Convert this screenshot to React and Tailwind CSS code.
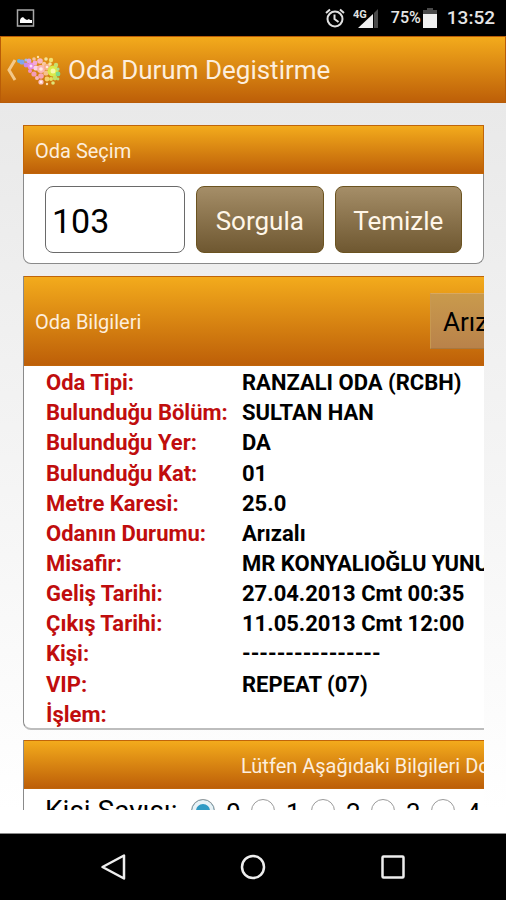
import React, { useState } from "react";

const roomInfo = [
  { label: "Oda Tipi:", value: "RANZALI ODA (RCBH)" },
  { label: "Bulunduğu Bölüm:", value: "SULTAN HAN" },
  { label: "Bulunduğu Yer:", value: "DA" },
  { label: "Bulunduğu Kat:", value: "01" },
  { label: "Metre Karesi:", value: "25.0" },
  { label: "Odanın Durumu:", value: "Arızalı" },
  { label: "Misafir:", value: "MR KONYALIOĞLU YUNUS" },
  { label: "Geliş Tarihi:", value: "27.04.2013 Cmt 00:35" },
  { label: "Çıkış Tarihi:", value: "11.05.2013 Cmt 12:00" },
  { label: "Kişi:", value: "----------------" },
  { label: "VIP:", value: "REPEAT (07)" },
  { label: "İşlem:", value: "" },
];

const guestCounts = [0, 1, 2, 3, 4];

const bubbles = [
  [2, 7, 2, "#5fb4e8"], [5, 8, 2.6, "#7fa6ea"], [9, 6, 1.6, "#9fc0e8"],
  [9, 11, 2.4, "#c98be6"], [12, 7, 2.4, "#d9a6ea"], [14, 12, 3.6, "#e58be0"],
  [13, 17, 2, "#f08fc8"], [17, 5, 1.8, "#f5c3a0"], [18, 9, 2.4, "#f3a8d8"],
  [19, 14, 2.6, "#fbd3e6"], [17, 20, 2.6, "#f39cb8"], [21, 3, 1.2, "#ffe3a8"],
  [23, 7, 2.8, "#f9b8c0"], [24, 15, 4, "#fbb6b4"], [20, 24, 2, "#f9b4c0"],
  [24, 22, 2.8, "#f7a6b4"], [24, 28, 2.6, "#fbc0c4"], [27, 10, 2.2, "#f9c8a0"],
  [29, 5, 1.8, "#f6e39a"], [30, 13, 3.2, "#f8b08a"], [29, 19, 2.6, "#f7c08a"],
  [30, 25, 2.4, "#f5d06a"], [34, 6, 2.2, "#f3e070"], [33, 10, 1.8, "#f6e8a0"],
  [36, 17, 5.5, "#dcea4a"], [39, 11, 2.2, "#c6e070"], [41, 15, 1.6, "#a8e090"],
  [41, 20, 2.4, "#7fdc8a"], [38, 24, 2.4, "#c6e060"], [34, 25, 2, "#e6e060"],
  [36, 29, 1.8, "#e0e478"], [41, 25, 1.4, "#b6e070"], [30, 30, 1.2, "#f6ddb0"],
];

const StatusBar = () => (
  <div className="flex h-9 shrink-0 items-center bg-black pl-4 pr-[11px] text-[#e6e6e6]">
    <svg viewBox="0 0 20 20" className="h-5 w-5" fill="none">
      <rect x="1.500" y="2" width="16" height="16" stroke="#a8a8a8" strokeWidth="1.5" />
      <path d="M4 15v-3l1-2 2-1 2 2 2 1 2-1 1 1h2v3z" fill="#fff" />
    </svg>
    <svg viewBox="0 0 20 20" className="ml-auto h-5 w-5" fill="none" stroke="#e0e0e0" strokeWidth="2">
      <circle cx="10" cy="11" r="7.5" />
      <path d="M9.500 6.500V11l4 3M1 5l4-3.500M19 5l-4-3.500" />
    </svg>
    <svg viewBox="0 0 26 22" className="ml-2 h-[22px] w-[26px]">
      <path d="M20 7v14H5z" fill="#f0f0f0" />
      <path d="M21 6l4-4v19h-4z" fill="#4a4a4a" />
      <text x="0" y="11" fontSize="11" fontWeight="700" fontFamily="Roboto" fill="#e0e0e0">4G</text>
    </svg>
    <span className="ml-3 text-base font-medium">75%</span>
    <svg viewBox="0 0 14 20" className="ml-[2px] h-5 w-[14px]">
      <path d="M4 0h6v2h4v4H0V2h4z" fill="#4a4a4a" />
      <path d="M0 6h14v14H0z" fill="#f0f0f0" />
    </svg>
    <span className="ml-[10px] text-[19px] font-medium">13:52</span>
  </div>
);

const TitleBar = () => (
  <header className="flex h-[67px] shrink-0 items-center border border-[#b85c08] bg-linear-to-b from-[#f3ab1c] to-[#bd5f08] pl-1 shadow-md">
    <button type="button" aria-label="Geri" className="flex items-center">
      <svg viewBox="0 0 12 24" className="h-6 w-3" fill="none" stroke="#f3c98a" strokeWidth="3">
        <path d="M10 2L4 12l6 10" />
      </svg>
      <svg viewBox="0 0 44 32" className="h-8 w-11">
        {bubbles.map(([x, y, r, color], index) => (
          <circle key={index} cx={x} cy={y} r={r} fill={color} />
        ))}
        <circle cx="36" cy="17" r="2.5" fill="#f8f8a8" />
        <circle cx="14" cy="12" r="1.5" fill="#fbe0fa" />
        <circle cx="24" cy="15" r="1.8" fill="#ffece8" />
        <circle cx="30" cy="13" r="1.3" fill="#ffece0" />
        <circle cx="24" cy="28" r="1.2" fill="#fff0f0" />
      </svg>
    </button>
    <h1 className="pl-[7px] pt-[2px] text-[26px] text-[#fdeedd]">Oda Durum Degistirme</h1>
  </header>
);

const App = () => {
  const [room, setRoom] = useState("103");
  const [guests, setGuests] = useState(0);

  return (
    <div className="flex h-screen flex-col bg-white font-[Roboto,sans-serif]">
      <StatusBar />
      <TitleBar />

      <main className="min-h-0 flex-1 overflow-hidden bg-linear-to-b from-[#e9e9e9] to-white pl-[23px] pr-[22px] pt-[22px]">
        <section className="mb-3 rounded-b-lg border border-t-0 border-[#8a8a8a] bg-white">
          <h2 className="-mx-px flex h-[49px] items-center border border-[#c0650a] bg-linear-to-b from-[#f3ab1c] to-[#bd5f08] pl-[11px] pt-[2px] text-xl text-[#fdeedd]">
            Oda Seçim
          </h2>
          <div className="flex gap-[11px] px-[21px] pb-[10px] pt-3">
            <input
              type="text"
              aria-label="Oda"
              value={room}
              onChange={(e) => setRoom(e.target.value)}
              className="h-[67px] w-[140px] rounded-lg border border-[#6a6a6a] bg-white px-[6px] pt-[2px] text-[34px] text-black"
            />
            <button
              type="button"
              className="h-[67px] flex-1 rounded-lg border border-[#6b5320] bg-linear-to-b from-[#a58e68] to-[#6f5831] pt-1 text-[26px] text-[#fff6e8]"
            >
              Sorgula
            </button>
            <button
              type="button"
              onClick={() => setRoom("")}
              className="h-[67px] flex-1 rounded-lg border border-[#6b5320] bg-linear-to-b from-[#a58e68] to-[#6f5831] pt-1 text-[26px] text-[#fff6e8]"
            >
              Temizle
            </button>
          </div>
        </section>

        <section className="mb-[10px] overflow-hidden rounded-bl-lg border-b-2 border-l border-b-[#bdbdbd] border-l-[#8a8a8a] bg-white">
          <div className="-ml-px flex h-[90px] w-[640px] items-center border border-[#c0650a] bg-linear-to-b from-[#f3ab1c] to-[#bd5f08] pl-[11px]">
            <h2 className="w-[395px] pt-[2px] text-xl text-[#fdeedd]">Oda Bilgileri</h2>
            <button
              type="button"
              className="h-14 border border-t-[#d8a860] border-r-[#a87840] border-b-[#a87840] border-l-[#c89850] bg-linear-to-b from-[#c99a4c] to-[#b9824a] px-3 pt-[2px] text-[26px] text-black"
            >
              Arızalı
            </button>
          </div>
          <table className="h-[362px] w-[640px] table-fixed text-left text-[22px] leading-[26px]">
            <tbody>
              {roomInfo.map((row) => (
                <tr key={row.label}>
                  <th className="w-[218px] p-0 pl-[22px] pt-1 font-bold text-[#c00d0d]">{row.label}</th>
                  <td className="whitespace-nowrap p-0 pt-1 font-bold text-black">{row.value}</td>
                </tr>
              ))}
            </tbody>
          </table>
        </section>

        <section className="overflow-hidden border-l border-[#8a8a8a] bg-white">
          <h2 className="-ml-px flex h-[49px] w-[640px] items-center border border-[#c0650a] bg-linear-to-b from-[#f3ab1c] to-[#bd5f08] pl-[217px] pt-[2px] text-xl text-[#fdeedd]">
            Lütfen Aşağıdaki Bilgileri Doldurunuz
          </h2>
          <div role="radiogroup" aria-labelledby="guests-label" className="flex w-[640px] items-start pl-[21px] pt-[10px] text-[26px]">
            <span id="guests-label" className="w-[146px] whitespace-nowrap text-[28px] leading-6">
              Kişi Sayısı:
            </span>
            {guestCounts.map((count) => (
              <label key={count} className="flex w-[60px] items-start gap-[11px] leading-7">
                <input
                  type="radio"
                  name="guests"
                  checked={guests === count}
                  onChange={() => setGuests(count)}
                  className="h-6 w-6 appearance-none rounded-full border border-[#9a9a9a] bg-white checked:bg-[#2f9ac4] checked:shadow-[inset_0_0_0_4px_#e8f2f6]"
                />
                {count}
              </label>
            ))}
          </div>
        </section>
      </main>

      <div className="h-[23px] shrink-0 bg-white" />
      <nav className="flex h-[67px] shrink-0 items-center justify-center gap-28 border-t border-[#8a8a8a] bg-black">
        <button type="button" aria-label="Geri">
          <svg viewBox="0 0 28 28" className="h-7 w-7" fill="none" stroke="#eee" strokeWidth="2.5">
            <path d="M25 2.500v23L3.500 14z" strokeLinejoin="round" />
          </svg>
        </button>
        <button type="button" aria-label="Ana ekran">
          <svg viewBox="0 0 28 28" className="h-7 w-7" fill="none" stroke="#eee" strokeWidth="2.5">
            <circle cx="14" cy="14" r="11" />
          </svg>
        </button>
        <button type="button" aria-label="Son uygulamalar">
          <svg viewBox="0 0 28 28" className="h-7 w-7" fill="none" stroke="#eee" strokeWidth="2.5">
            <rect x="3.500" y="3.500" width="21" height="21" rx="1" />
          </svg>
        </button>
      </nav>
    </div>
  );
};

export default App;
